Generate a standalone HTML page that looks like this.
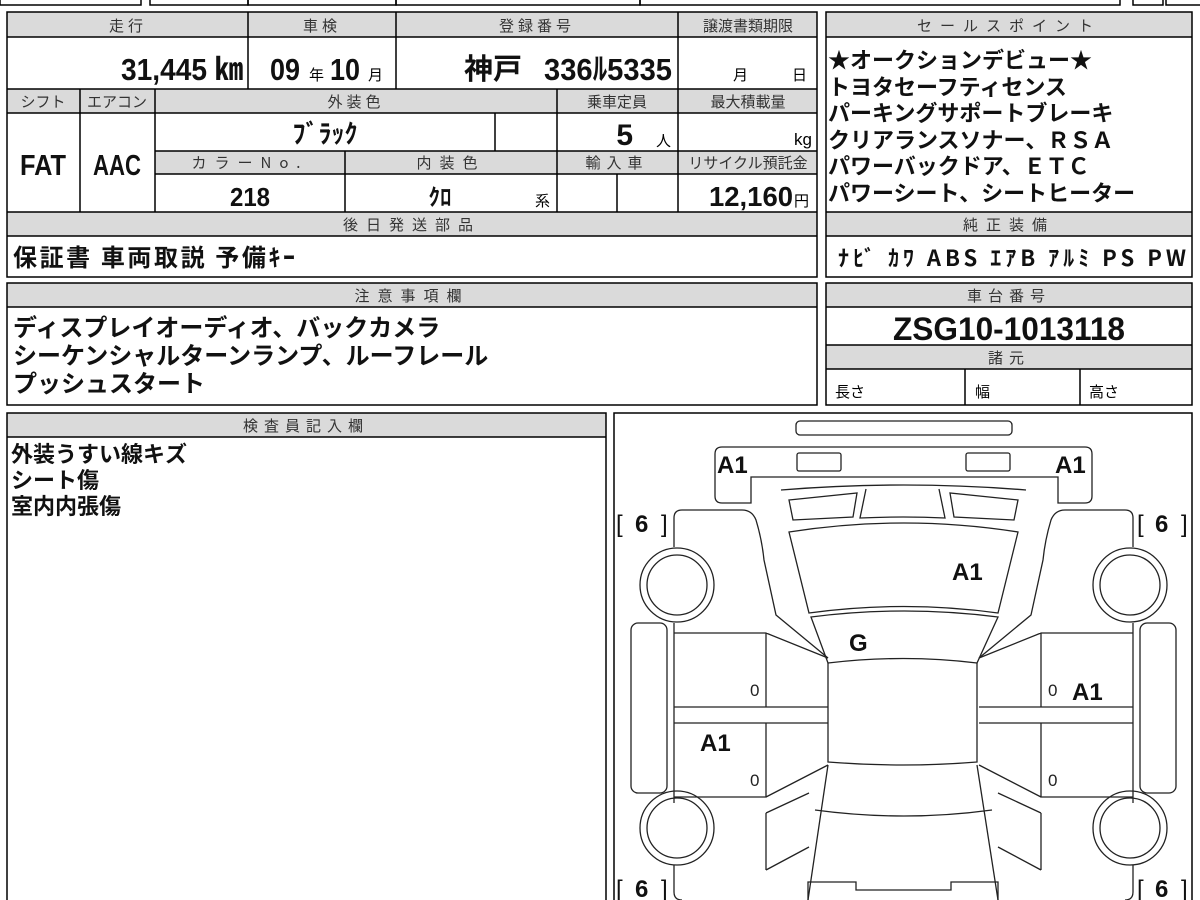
<!DOCTYPE html>
<html><head><meta charset="utf-8"><style>
html,body{margin:0;padding:0;background:#fff;width:1200px;height:900px;overflow:hidden}
svg text{font-family:"Liberation Sans","Noto Sans CJK JP",sans-serif}
.h{font-size:15px;fill:#333;text-anchor:middle;letter-spacing:4px}
.b{font-weight:bold;fill:#111}
.j{font-family:"Noto Sans CJK JP","Liberation Sans",sans-serif!important}
</style></head><body>
<svg width="1200" height="900" viewBox="0 0 1200 900" xmlns="http://www.w3.org/2000/svg">
<g fill="none" stroke="#000" stroke-width="1.5">
<rect x="0" y="-20" width="141" height="25"/><rect x="150" y="-20" width="98" height="25"/><rect x="248" y="-20" width="148" height="25"/><rect x="396" y="-20" width="244" height="25"/><rect x="640" y="-20" width="480" height="25"/><rect x="1133" y="-20" width="30" height="25"/><rect x="1166" y="-20" width="40" height="25"/>
</g>
<g fill="#dadada">
<rect x="7" y="12" width="810" height="25"/><rect x="7" y="89" width="810" height="24"/><rect x="155" y="151" width="662" height="23"/><rect x="7" y="212" width="810" height="24"/>
<rect x="826" y="12" width="366" height="25"/><rect x="826" y="212" width="366" height="24"/>
<rect x="7" y="283" width="810" height="24"/><rect x="826" y="283" width="366" height="24"/><rect x="826" y="345" width="366" height="24"/>
<rect x="7" y="413" width="599" height="24"/>
</g>
<g fill="none" stroke="#000" stroke-width="1.5">
<rect x="7" y="12" width="810" height="265"/>
<path d="M7 37H817M7 89H817M7 113H817M155 151H817M155 174H817M7 212H817M7 236H817"/>
<path d="M248 12V89M396 12V89M678 12V212M80 89V212M155 89V212M557 89V212M495 113V151M345 151V212M617 174V212"/>
<rect x="826" y="12" width="366" height="265"/><path d="M826 37H1192M826 212H1192M826 236H1192"/>
<rect x="7" y="283" width="810" height="122"/><path d="M7 307H817"/>
<rect x="826" y="283" width="366" height="122"/><path d="M826 307H1192M826 345H1192M826 369H1192M965 369V405M1080 369V405"/>
<rect x="7" y="413" width="599" height="500"/><path d="M7 437H606"/>
<rect x="614" y="413" width="578" height="500"/>
</g>
<text class="h j" x="128" y="31">走行</text><text class="h j" x="322" y="31">車検</text><text class="h j" x="537" y="31">登録番号</text><text class="h j" x="748" y="31" style="letter-spacing:0">譲渡書類期限</text>
<text class="b" x="243" y="80" font-size="31" text-anchor="end" textLength="122" lengthAdjust="spacingAndGlyphs">31,445 ㎞</text>
<text class="b" x="270" y="80" font-size="31" textLength="30" lengthAdjust="spacingAndGlyphs">09</text><text class="j" x="309" y="80" font-size="15">年</text><text class="b" x="330" y="80" font-size="31" textLength="30" lengthAdjust="spacingAndGlyphs">10</text><text class="j" x="368" y="80" font-size="15">月</text>
<text class="b j" x="464" y="79" font-size="29">神戸</text><text class="b" x="672" y="80" font-size="31" text-anchor="end" textLength="128" lengthAdjust="spacingAndGlyphs">336ﾙ5335</text>
<text class="j" x="733" y="80" font-size="15">月</text><text class="j" x="792" y="80" font-size="15">日</text>
<text class="h j" x="43" y="107" style="letter-spacing:0">シフト</text><text class="h j" x="117" y="107" style="letter-spacing:0">エアコン</text><text class="h j" x="356" y="107">外装色</text><text class="h j" x="617" y="107" style="letter-spacing:0">乗車定員</text><text class="h j" x="748" y="107" style="letter-spacing:0">最大積載量</text>
<text class="b" x="43" y="175" font-size="29" text-anchor="middle" textLength="46" lengthAdjust="spacingAndGlyphs">FAT</text><text class="b" x="117" y="175" font-size="29" text-anchor="middle" textLength="48" lengthAdjust="spacingAndGlyphs">AAC</text>
<text class="b j" x="325" y="143" font-size="26" text-anchor="middle">ﾌﾞﾗｯｸ</text>
<text class="b" x="633" y="145" font-size="30" text-anchor="end">5</text><text class="j" x="656" y="146" font-size="15">人</text><text x="812" y="145" font-size="17" text-anchor="end">kg</text>
<text class="h j" x="250" y="168" style="letter-spacing:8px">カラーNo.</text><text class="h j" x="451" y="168" style="letter-spacing:8px">内装色</text><text class="h j" x="617" y="168" style="letter-spacing:6px">輸入車</text><text class="h j" x="748" y="168" style="letter-spacing:0">リサイクル預託金</text>
<text class="b" x="250" y="206" font-size="26" text-anchor="middle" textLength="40" lengthAdjust="spacingAndGlyphs">218</text><text class="b j" x="440" y="205" font-size="23" text-anchor="middle">ｸﾛ</text><text class="j" x="535" y="206" font-size="15">系</text>
<text class="b" x="793" y="206" font-size="28" text-anchor="end" textLength="84" lengthAdjust="spacingAndGlyphs">12,160</text><text class="j" x="794" y="206" font-size="15">円</text>
<text class="h j" x="412" y="230" style="letter-spacing:8px">後日発送部品</text>
<text class="b j" x="13" y="266" font-size="24" textLength="282" lengthAdjust="spacing">保証書  車両取説  予備ｷｰ</text>
<text class="h j" x="1009" y="31" style="letter-spacing:8px">セールスポイント</text>
<text class="b j" x="828" y="68" font-size="22">★オークションデビュー★</text>
<text class="b j" x="828" y="95" font-size="22">トヨタセーフティセンス</text>
<text class="b j" x="828" y="121" font-size="22">パーキングサポートブレーキ</text>
<text class="b j" x="828" y="148" font-size="22">クリアランスソナー、ＲＳＡ</text>
<text class="b j" x="828" y="174" font-size="22">パワーバックドア、ＥＴＣ</text>
<text class="b j" x="828" y="201" font-size="22">パワーシート、シートヒーター</text>
<text class="h j" x="1009" y="230" style="letter-spacing:8px">純正装備</text>
<text class="b j" x="838" y="266" font-size="22" textLength="348" lengthAdjust="spacing">ﾅﾋﾞ ｶﾜ ABS ｴｱB ｱﾙﾐ PS PW</text>
<text class="h j" x="412" y="301" style="letter-spacing:8px">注意事項欄</text>
<text class="b j" x="13" y="336" font-size="24">ディスプレイオーディオ、バックカメラ</text>
<text class="b j" x="13" y="364" font-size="24">シーケンシャルターンランプ、ルーフレール</text>
<text class="b j" x="13" y="392" font-size="24">プッシュスタート</text>
<text class="h j" x="1009" y="301" style="letter-spacing:6px">車台番号</text>
<text class="b" x="1009" y="340" font-size="32" text-anchor="middle" textLength="232" lengthAdjust="spacingAndGlyphs">ZSG10-1013118</text>
<text class="h j" x="1009" y="363" style="letter-spacing:6px">諸元</text>
<text class="j" x="835" y="397" font-size="15">長さ</text><text class="j" x="975" y="397" font-size="15">幅</text><text class="j" x="1089" y="397" font-size="15">高さ</text>
<text class="h j" x="306" y="431" style="letter-spacing:6px">検査員記入欄</text>
<text class="b j" x="11" y="462" font-size="22">外装うすい線キズ</text>
<text class="b j" x="11" y="488" font-size="22">シート傷</text>
<text class="b j" x="11" y="514" font-size="22">室内内張傷</text>
<g fill="none" stroke="#222" stroke-width="1.3">
<rect x="796" y="421" width="216" height="14" rx="4"/>
<path d="M751 503H722Q715 503 715 496V454Q715 447 722 447H1085Q1092 447 1092 454V496Q1092 503 1085 503H1058V477H751Z"/>
<rect x="797" y="453" width="44" height="18" rx="2"/><rect x="966" y="453" width="44" height="18" rx="2"/>
<path d="M781 490Q904 480 1026 490"/>
<path d="M789 500L857 493L853 517L793 520Z"/>
<path d="M1018 500L950 493L954 517L1014 520Z"/>
<path d="M866 489L860 518Q904 516 945 518L939 489"/>
<path d="M789 532Q904 514 1018 532L998 613Q904 600 809 613Z"/>
<path d="M811 617Q904 605 998 617L977 663Q904 654 828 663Z"/>
<path d="M828 663V762Q904 768 977 762V663"/>
<path d="M828 765L808 900M977 765L998 900M815 810Q904 822 992 810"/>
<path d="M808 900V882H856V890H951V882H998V900"/>
<g id="L">
<path d="M674 547V518Q674 510 682 510H742Q752 510 756 520Q762 540 764 560L776 615L828 658"/>
<circle cx="677" cy="585" r="37"/><circle cx="677" cy="585" r="30"/>
<rect x="631" y="623" width="36" height="170" rx="7"/>
<path d="M674 623V633H766V707H828M674 707H766M674 723H828M766 723V797H674V803M674 633V797M766 633L828 658M766 797L828 765"/>
<path d="M766 813L809 793M766 870L809 847M766 813V870"/>
<circle cx="677" cy="828" r="37"/><circle cx="677" cy="828" r="30"/>
<path d="M674 865V892Q674 900 682 900"/>
</g>
<use href="#L" transform="matrix(-1 0 0 1 1807 0)"/>
</g>
<text class="b" x="717" y="473" font-size="24">A1</text><text class="b" x="1055" y="473" font-size="24">A1</text>
<text class="b" x="952" y="580" font-size="24">A1</text><text class="b" x="849" y="651" font-size="24">G</text>
<text class="b" x="1072" y="700" font-size="24">A1</text><text class="b" x="700" y="751" font-size="24">A1</text>
<g font-size="17" fill="#222"><text x="750" y="696">0</text><text x="1048" y="696">0</text><text x="750" y="786">0</text><text x="1048" y="786">0</text></g>
<g font-size="24" fill="#111">
<text x="616" y="532">[</text><text x="635" y="532" font-weight="bold">6</text><text x="661" y="532">]</text>
<text x="1137" y="532">[</text><text x="1155" y="532" font-weight="bold">6</text><text x="1181" y="532">]</text>
<text x="616" y="897">[</text><text x="635" y="897" font-weight="bold">6</text><text x="661" y="897">]</text>
<text x="1137" y="897">[</text><text x="1155" y="897" font-weight="bold">6</text><text x="1181" y="897">]</text>
</g>
</svg>
</body></html>
